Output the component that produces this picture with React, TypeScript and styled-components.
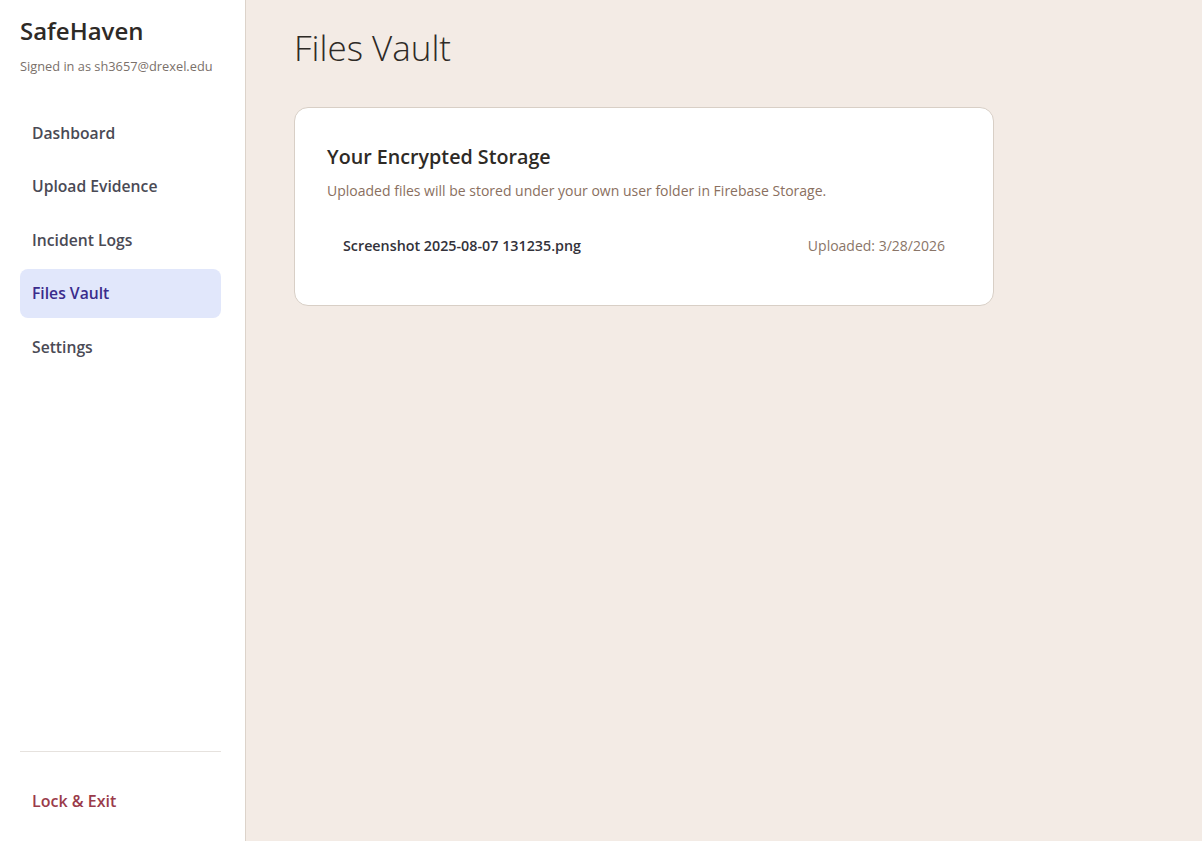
import React from 'react';
import styled, {createGlobalStyle} from 'styled-components';

const GlobalStyle = createGlobalStyle`
  html, body {
    margin: 0;
    padding: 0;
    height: 100%;
  }
  body {
    font-family: "Open Sans", "Noto Sans", sans-serif;
    background: #F3EBE5;
  }
  #root {
    height: 100%;
  }
`;

const Layout = styled.div`
  display: flex;
  height: 841px;
`;

const Sidebar = styled.aside`
  width: 246px;
  flex-shrink: 0;
  box-sizing: border-box;
  background: #FFFFFF;
  border-right: 1px solid #DCD3CA;
  padding: 14px 24px 12px 20px;
  display: flex;
  flex-direction: column;
`;

const Brand = styled.div`
  font-size: 24px;
  font-weight: 600;
  color: #2E2A26;
`;

const SignedIn = styled.div`
  margin-top: 10px;
  font-size: 12.8px;
  color: #7A706A;
`;

const Nav = styled.nav`
  margin-top: 33px;
  display: flex;
  flex-direction: column;
  gap: 4.5px;
`;

const NavItem = styled.div<{active?: boolean}>`
  height: 49px;
  display: flex;
  align-items: center;
  padding: 0 12px;
  border-radius: 8px;
  font-size: 15.7px;
  font-weight: 600;
  color: ${props => props.active ? '#3A2C8C' : '#4A4A55'};
  background: ${props => props.active ? '#E1E7FB' : 'transparent'};
`;

const Spacer = styled.div`
  flex: 1;
`;

const Divider = styled.hr`
  border: none;
  border-top: 1px solid #E6E2DE;
  margin: 0 0 24px;
`;

const LockButton = styled.div`
  height: 49px;
  display: flex;
  align-items: center;
  padding: 0 12px 4px;
  font-size: 16px;
  font-weight: 600;
  color: #9A3B4A;
`;

const Main = styled.main`
  flex: 1;
  padding: 24px 48px;
`;

const PageTitle = styled.h1`
  margin: 0;
  font-size: 35px;
  font-weight: 300;
  color: #2E2A26;
`;

const Card = styled.section`
  margin-top: 36px;
  width: 700px;
  box-sizing: border-box;
  background: #FFFFFF;
  border: 1px solid #D8CFC6;
  border-radius: 14px;
  padding: 35px 32px 38px;
`;

const CardTitle = styled.h2`
  margin: 0;
  font-size: 19.7px;
  font-weight: 600;
  color: #2E2A26;
`;

const CardText = styled.p`
  margin: 11px 0 0;
  font-size: 14px;
  color: #8A6F60;
`;

const FileList = styled.div`
  margin-top: 24px;
  display: flex;
  flex-direction: column;
`;

const FileRow = styled.div`
  display: flex;
  justify-content: space-between;
  align-items: center;
  padding: 12px 16px;
`;

const FileName = styled.span`
  font-size: 14.3px;
  font-weight: 600;
  color: #33323A;
`;

const FileDate = styled.span`
  font-size: 14px;
  color: #8A7568;
`;

const navItems = ['Dashboard', 'Upload Evidence', 'Incident Logs', 'Files Vault', 'Settings'];

const files = [
    {name: 'Screenshot 2025-08-07 131235.png', uploaded: '3/28/2026'},
];

export default function App()
{
    return (
        <>
            <GlobalStyle/>
            <Layout>
                <Sidebar>
                    <Brand>SafeHaven</Brand>
                    <SignedIn>Signed in as sh3657@drexel.edu</SignedIn>
                    <Nav>
                        {navItems.map(item =>
                            <NavItem key={item} active={item === 'Files Vault'}>{item}</NavItem>
                        )}
                    </Nav>
                    <Spacer/>
                    <Divider/>
                    <LockButton>Lock &amp; Exit</LockButton>
                </Sidebar>
                <Main>
                    <PageTitle>Files Vault</PageTitle>
                    <Card>
                        <CardTitle>Your Encrypted Storage</CardTitle>
                        <CardText>Uploaded files will be stored under your own user folder in Firebase Storage.</CardText>
                        <FileList>
                            {files.map(file =>
                                <FileRow key={file.name}>
                                    <FileName>{file.name}</FileName>
                                    <FileDate>Uploaded: {file.uploaded}</FileDate>
                                </FileRow>
                            )}
                        </FileList>
                    </Card>
                </Main>
            </Layout>
        </>
    );
}
